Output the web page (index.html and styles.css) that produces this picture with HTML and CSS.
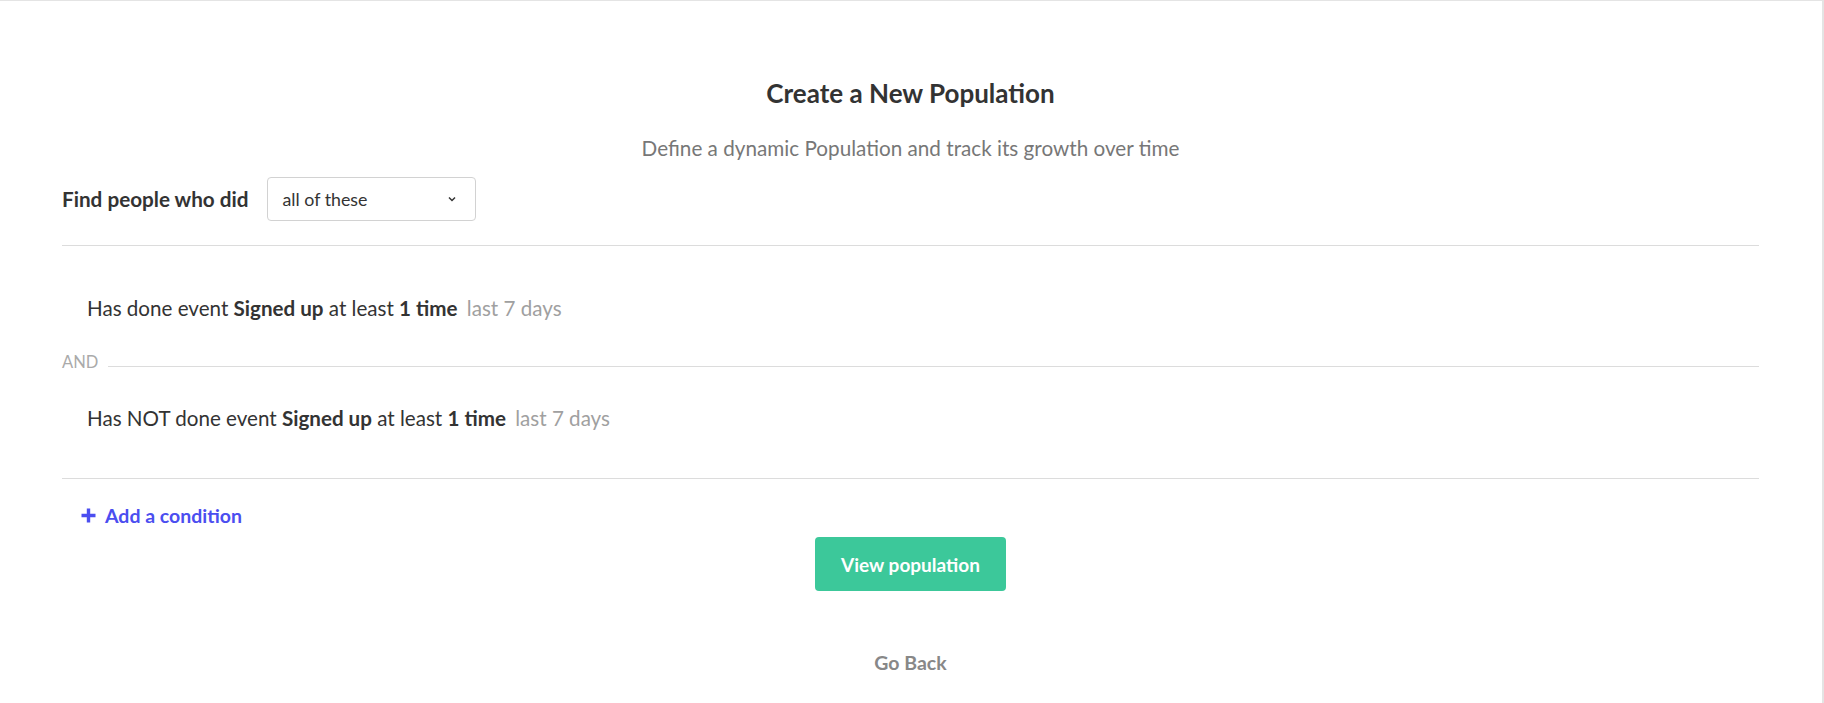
FILE: index.html
```html
<!DOCTYPE html>
<html>
<head>
<meta charset="utf-8">
<link rel="stylesheet" href="styles.css">
</head>
<body>
<div class="page">
  <h1 class="title">Create a New Population</h1>
  <p class="subtitle">Define a dynamic Population and track its growth over time</p>
  <div class="find-row">
    <span class="find-label">Find people who did</span>
    <div class="select">
      <span>all of these</span>
      <svg class="chev" width="8" height="6" viewBox="0 0 8 6"><path d="M1 1.5 L4 4.5 L7 1.5" fill="none" stroke="#333" stroke-width="1.5"/></svg>
    </div>
  </div>
  <div class="conditions">
    <div class="cond">Has done event <b>Signed up</b> at least <b>1 time</b> <span class="muted">last 7 days</span></div>
    <div class="and-row"><span class="and">AND</span><span class="and-line"></span></div>
    <div class="cond">Has NOT done event <b>Signed up</b> at least <b>1 time</b> <span class="muted">last 7 days</span></div>
  </div>
  <div class="add">
    <svg width="15" height="15" viewBox="0 0 15 15"><path d="M7.5 0.5 V14.5 M0.5 7.5 H14.5" stroke="#4b4ef0" stroke-width="3.4"/></svg>
    <span>Add a condition</span>
  </div>
  <div class="actions">
    <button class="btn">View population</button>
    <a class="back">Go Back</a>
  </div>
</div>
</body>
</html>
```

FILE: styles.css
```css
html, body {
  margin: 0;
  padding: 0;
  background: #fff;
}
body {
  font-family: Lato, "Open Sans", sans-serif;
  color: #333;
}
.page {
  box-sizing: border-box;
  height: 703px;
  border-top: 1px solid #e4e4e4;
  border-right: 2px solid #e4e4e4;
  padding: 0 63px 0 62px;
}
.title {
  margin: 77px 0 0;
  text-align: center;
  font-size: 26px;
  line-height: 30px;
  font-weight: 700;
  color: #333;
}
.subtitle {
  margin: 28px 0 0;
  text-align: center;
  font-size: 20.7px;
  line-height: 24px;
  color: #777;
}
.find-row {
  display: flex;
  align-items: center;
  gap: 18px;
  margin-top: 17px;
  padding-bottom: 24px;
  border-bottom: 1px solid #dcdcdc;
}
.find-label {
  font-size: 20.7px;
  font-weight: 700;
  color: #333;
}
.select {
  box-sizing: border-box;
  width: 209px;
  height: 44px;
  border: 1px solid #d2d2d2;
  border-radius: 4px;
  display: flex;
  align-items: center;
  justify-content: space-between;
  padding: 0 19px 0 15px;
  font-size: 17.8px;
  color: #333;
}
.conditions {
  padding: 50px 0 48px;
  border-bottom: 1px solid #dcdcdc;
}
.cond {
  font-size: 20.6px;
  line-height: 24px;
  padding-left: 25px;
  color: #333;
}
.cond b {
  font-weight: 700;
}
.muted {
  color: #a0a0a0;
  margin-left: 4px;
}
.and-row {
  display: flex;
  align-items: center;
  margin: 32px 0 34px;
  height: 20px;
}
.and {
  font-size: 16.5px;
  color: #aaa;
  margin-right: 10px;
}
.and-line {
  flex: 1;
  border-top: 1px solid #dcdcdc;
  margin-top: 8px;
}
.add {
  display: flex;
  align-items: center;
  gap: 9px;
  margin: 24px 0 0 19px;
  height: 24px;
  font-size: 19.5px;
  font-weight: 700;
  color: #4b4ef0;
}
.actions {
  display: flex;
  flex-direction: column;
  align-items: center;
}
.btn {
  margin-top: 10px;
  width: 191px;
  height: 54px;
  background: #3cc89a;
  border: none;
  border-radius: 4px;
  color: #fff;
  font-family: inherit;
  font-size: 19px;
  font-weight: 700;
}
.back {
  margin-top: 60px;
  line-height: 24px;
  font-size: 19.5px;
  font-weight: 700;
  color: #888;
}
```
